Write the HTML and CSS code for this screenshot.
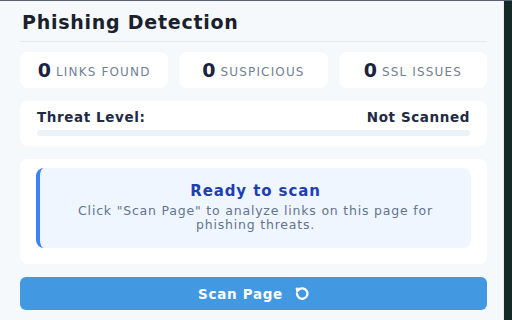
FILE: index.html
```html
<!DOCTYPE html>
<html>
<head>
<meta charset="utf-8">
<link rel="stylesheet" href="styles.css">
</head>
<body>
<div class="frame">
  <div class="app">
    <h1 class="title">Phishing Detection</h1>
    <div class="stats">
      <div class="stat"><span class="num">0</span><span class="lbl">LINKS FOUND</span></div>
      <div class="stat"><span class="num">0</span><span class="lbl">SUSPICIOUS</span></div>
      <div class="stat"><span class="num">0</span><span class="lbl">SSL ISSUES</span></div>
    </div>
    <div class="card threat">
      <div class="threat-row"><span>Threat Level:</span><span>Not Scanned</span></div>
      <div class="bar"></div>
    </div>
    <div class="card info">
      <div class="notice">
        <div class="notice-title">Ready to scan</div>
        <div class="notice-text">Click "Scan Page" to analyze links on this page for phishing threats.</div>
      </div>
    </div>
    <button class="scan">Scan Page <span class="ico"><svg width="14" height="14" viewBox="0 0 16 16"><path d="M4 3.2 A6 6 0 1 1 2.2 7.5" fill="none" stroke="#fff" stroke-width="2.6" stroke-linecap="round"/><path d="M1.2 1.2 L6.8 1.6 L2.2 6.4 Z" fill="#fff" stroke="#fff" stroke-width="1" stroke-linejoin="round"/></svg></span></button>
  </div>
  <div class="edge"></div>
</div>
</body>
</html>
```
FILE: styles.css
```css
* { box-sizing: border-box; }
html, body { margin: 0; padding: 0; }
body {
  width: 512px;
  height: 320px;
  overflow: hidden;
  background: #5a6270;
  font-family: "DejaVu Sans", "Noto Sans", sans-serif;
}
.frame {
  display: flex;
  height: 320px;
  padding-top: 1px;
}
.app {
  width: 504px;
  flex: none;
  background: #f5f9fc;
  border-right: 1px solid #e6ecf2;
  padding: 8px 16px 0 20px;
}
.edge {
  flex: 1;
  background: #142a26;
}
.title {
  margin: 0;
  padding-left: 2px;
  font-size: 19px;
  letter-spacing: 0.75px;
  font-weight: 700;
  color: #1a202c;
  line-height: 26px;
  padding-bottom: 6px;
  border-bottom: 1px solid #e5eaf0;
}
.stats {
  display: flex;
  gap: 11px;
  margin-top: 10px;
}
.stat {
  flex: 1;
  height: 36px;
  background: #fff;
  border-radius: 8px;
  display: flex;
  align-items: center;
  justify-content: center;
  gap: 5px;
}
.num {
  font-size: 19px;
  font-weight: 800;
  color: #1a2340;
}
.lbl {
  font-size: 12px;
  color: #718096;
  letter-spacing: 1.15px;
  padding-top: 3px;
}
.card {
  background: #fff;
  border-radius: 8px;
}
.threat {
  margin-top: 13px;
  padding: 8px 17px 10px 17px;
}
.threat-row {
  display: flex;
  justify-content: space-between;
  font-size: 13.5px;
  letter-spacing: 0.6px;
  font-weight: 700;
  color: #1f2a44;
  line-height: 16px;
}
.bar {
  margin-top: 5px;
  height: 6px;
  background: #edf2f7;
  border-radius: 3px;
}
.info {
  margin-top: 13px;
  padding: 9px 16px 16px 16px;
}
.notice {
  background: #eff6ff;
  border-left: 4px solid #3b82f6;
  border-radius: 8px;
  text-align: center;
  padding: 14px 20px 14px 20px;
  height: 80px;
}
.notice-title {
  font-size: 15px;
  font-weight: 700;
  color: #1e40af;
  line-height: 18px;
  letter-spacing: 0.9px;
}
.notice-text {
  margin-top: 4px;
  font-size: 12.5px;
  color: #64748b;
  line-height: 14px;
  letter-spacing: 0.8px;
}
.scan {
  display: flex;
  align-items: center;
  justify-content: center;
  gap: 12px;
  width: 100%;
  margin-top: 13px;
  height: 33px;
  border: none;
  border-radius: 6px;
  background: #4299e1;
  color: #fff;
  font-family: "DejaVu Sans", sans-serif;
  font-weight: 700;
  font-size: 13.5px;
  letter-spacing: 0.7px;
}
.ico { display: inline-flex; }
```
